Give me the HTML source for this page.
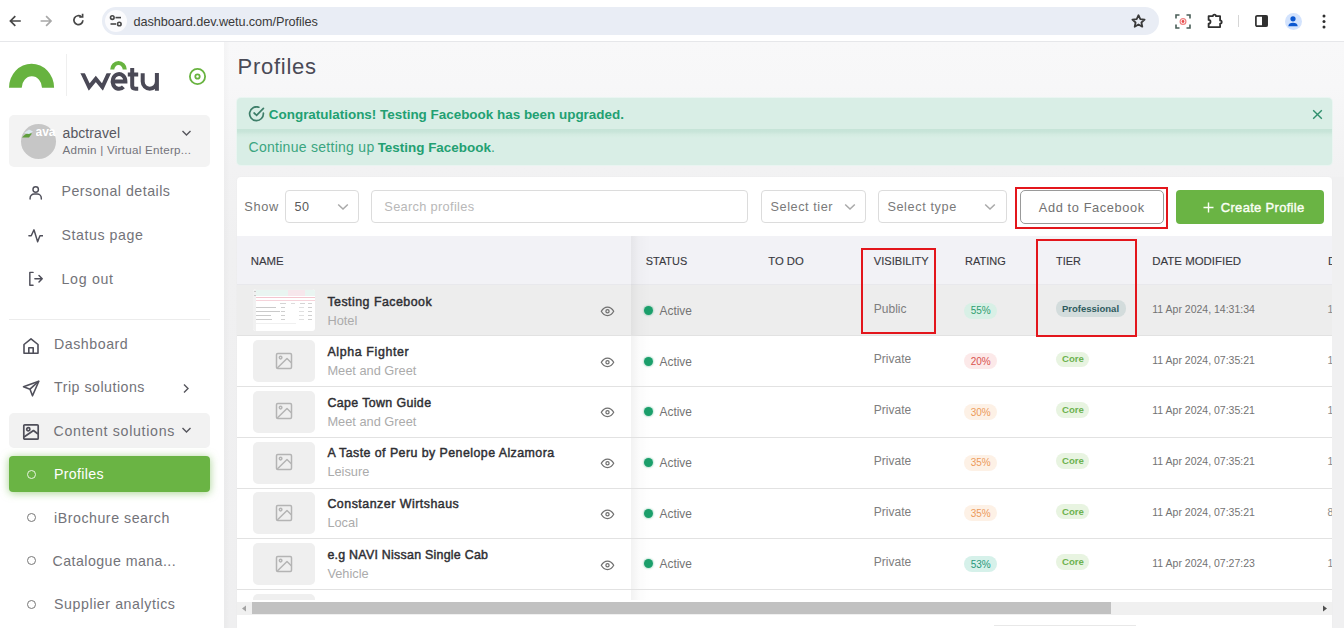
<!DOCTYPE html>
<html><head><meta charset="utf-8">
<style>
*{box-sizing:border-box;margin:0;padding:0}
html,body{width:1344px;height:628px;overflow:hidden;background:#f5f5f6;font-family:"Liberation Sans",sans-serif;position:relative}
.b{position:absolute}
.t{position:absolute;white-space:nowrap}
</style></head><body>
<div class="b" style="left:224px;top:42px;width:1120px;height:586px;background:linear-gradient(#f8f8f9 0px,#f7f7f8 45px,#f2f2f3 125px,#f0f0f1 200px,#efeff0 586px)"></div>
<div class="b" style="left:1332px;top:177px;width:12px;height:451px;background:#f0f0f1"></div>
<div class="b" style="left:224px;top:42px;width:6px;height:586px;background:linear-gradient(90deg,rgba(0,0,0,0.02),rgba(0,0,0,0))"></div>
<div class="t " style="left:237.5px;top:56px;font-size:22px;line-height:22px;color:#4a4a56;font-weight:400;letter-spacing:0.75px;">Profiles</div>
<div class="b" style="left:236px;top:97px;width:1097px;height:69px;background:rgba(230,245,240,0.7);border-radius:5px"></div>
<div class="b" style="left:237px;top:98px;width:1095px;height:67px;background:#d9eee6;border-radius:4px"></div>
<div class="b" style="left:237px;top:128.5px;width:1095px;height:9px;background:linear-gradient(#c6e4d8,#c8e5d9 30%,#d3ebe1 60%,#d9efe6)"></div>
<svg class="b" style="left:248px;top:106px" width="17" height="17" viewBox="0 0 17 17" fill="none" stroke="#3d7e69" stroke-width="1.7" stroke-linecap="round">
<path d="M10.86 1.22A6.9 6.9 0 1 0 15.37 7.1"/><path d="M6.1 7L8.6 9.3L15.4 2.4"/></svg>
<div class="t " style="left:268.8px;top:108px;font-size:13.45px;line-height:13.45px;color:#22a072;font-weight:700;letter-spacing:0px;">Congratulations! Testing Facebook has been upgraded.</div>
<svg class="b" style="left:1312px;top:109px" width="11" height="11" viewBox="0 0 11 11" fill="none" stroke="#2f8f6d" stroke-width="1.4">
<path d="M1.2 1.2L9.8 9.8M9.8 1.2L1.2 9.8"/></svg>
<div class="t " style="left:248.5px;top:140px;font-size:14.0px;line-height:14.0px;color:#3aa580;font-weight:400;letter-spacing:0.28px;">Continue setting up <b style="color:#23a072;font-size:13.45px;letter-spacing:0;margin-left:-1px">Testing Facebook</b>.</div>
<div class="b" style="left:237px;top:177px;width:1095px;height:451px;background:#fff;border-radius:4px 4px 0 0;box-shadow:0 0 2px rgba(0,0,0,0.04)"></div>
<div class="t " style="left:244.3px;top:201px;font-size:12.8px;line-height:12.8px;color:#747474;font-weight:400;letter-spacing:0.627px;">Show</div>
<div class="b" style="left:285px;top:190px;width:74px;height:33px;border:1px solid #dcdcdc;border-radius:4px;background:#fff"></div>
<div class="t " style="left:294.5px;top:201px;font-size:12.6px;line-height:12.6px;color:#5a5a5a;font-weight:400;letter-spacing:0.586px;">50</div>
<svg class="b" style="left:337px;top:203px" width="12" height="8" viewBox="0 0 12 8" fill="none" stroke="#a9a9a9" stroke-width="1.5"><path d="M1.2 1.5L6 6L10.8 1.5"/></svg>
<div class="b" style="left:371px;top:190px;width:377px;height:33px;border:1px solid #dcdcdc;border-radius:4px;background:#fff"></div>
<div class="t " style="left:384.3px;top:201px;font-size:12.8px;line-height:12.8px;color:#b8b8b8;font-weight:400;letter-spacing:0.316px;">Search profiles</div>
<div class="b" style="left:761px;top:190px;width:105px;height:33px;border:1px solid #dcdcdc;border-radius:4px;background:#fff"></div>
<div class="t " style="left:770.6px;top:201px;font-size:12.7px;line-height:12.7px;color:#7a7a7a;font-weight:400;letter-spacing:0.553px;">Select tier</div>
<svg class="b" style="left:843.5px;top:203px" width="12" height="8" viewBox="0 0 12 8" fill="none" stroke="#a9a9a9" stroke-width="1.5"><path d="M1.2 1.5L6 6L10.8 1.5"/></svg>
<div class="b" style="left:878px;top:190px;width:129px;height:33px;border:1px solid #dcdcdc;border-radius:4px;background:#fff"></div>
<div class="t " style="left:887.4px;top:201px;font-size:12.7px;line-height:12.7px;color:#7a7a7a;font-weight:400;letter-spacing:0.607px;">Select type</div>
<svg class="b" style="left:984px;top:203px" width="12" height="8" viewBox="0 0 12 8" fill="none" stroke="#a9a9a9" stroke-width="1.5"><path d="M1.2 1.5L6 6L10.8 1.5"/></svg>
<div class="b" style="left:1020px;top:189.5px;width:144px;height:34.5px;border:1px solid #9a9a9a;border-radius:5px;background:#fff"></div>
<div class="t " style="left:1038.8px;top:202px;font-size:12.8px;line-height:12.8px;color:#727272;font-weight:400;letter-spacing:0.617px;">Add to Facebook</div>
<div class="b" style="left:1176px;top:190px;width:148px;height:34px;background:#6ab444;border-radius:4px"></div>
<svg class="b" style="left:1203px;top:201.5px" width="11" height="11" viewBox="0 0 11 11" fill="none" stroke="#fbfff6" stroke-width="1.4"><path d="M5.5 0.5V10.5M0.5 5.5H10.5"/></svg>
<div class="t " style="left:1220.8px;top:201px;font-size:13.0px;line-height:13.0px;color:#fbfff6;font-weight:400;letter-spacing:0.302px;-webkit-text-stroke:0.4px #fbfff6">Create Profile</div>
<div class="b" style="left:237px;top:236px;width:1095px;height:49px;background:#f2f2f6;border-bottom:1px solid #e8e8ec"></div>
<div class="t " style="left:250.7px;top:256px;font-size:11.4px;line-height:11.4px;color:#38383e;font-weight:400;letter-spacing:0px;-webkit-text-stroke:0.12px #3d3d42">NAME</div>
<div class="t " style="left:645.8px;top:256px;font-size:10.9px;line-height:10.9px;color:#38383e;font-weight:400;letter-spacing:0px;-webkit-text-stroke:0.12px #3d3d42">STATUS</div>
<div class="t " style="left:768.2px;top:256px;font-size:11.3px;line-height:11.3px;color:#38383e;font-weight:400;letter-spacing:0px;-webkit-text-stroke:0.12px #3d3d42">TO DO</div>
<div class="t " style="left:873.8px;top:256px;font-size:11.1px;line-height:11.1px;color:#38383e;font-weight:400;letter-spacing:0px;-webkit-text-stroke:0.12px #3d3d42">VISIBILITY</div>
<div class="t " style="left:965.0px;top:256px;font-size:11.0px;line-height:11.0px;color:#38383e;font-weight:400;letter-spacing:0px;-webkit-text-stroke:0.12px #3d3d42">RATING</div>
<div class="t " style="left:1056.0px;top:256px;font-size:10.9px;line-height:10.9px;color:#38383e;font-weight:400;letter-spacing:0px;-webkit-text-stroke:0.12px #3d3d42">TIER</div>
<div class="t " style="left:1152.3px;top:256px;font-size:11.45px;line-height:11.45px;color:#38383e;font-weight:400;letter-spacing:0px;-webkit-text-stroke:0.12px #3d3d42">DATE MODIFIED</div>
<div class="t " style="left:1328.0px;top:256px;font-size:11.2px;line-height:11.2px;color:#38383e;font-weight:400;letter-spacing:0px;-webkit-text-stroke:0.12px #3d3d42">D</div>
<div class="b" style="left:237px;top:285px;width:1095px;height:50.3px;background:#ededed"></div>
<div class="b" style="left:237px;top:335.3px;width:1095px;height:1px;background:#e2e2e2;z-index:2"></div>
<div class="b" style="left:253px;top:289px;width:62px;height:42px;background:#fff;border-radius:3px;overflow:hidden"><div class="b" style="left:0px;top:0px;width:3px;height:42px;background:#f1f1f1"></div><div class="b" style="left:0.5px;top:2px;width:2px;height:1px;background:#c8c8c8"></div><div class="b" style="left:0.5px;top:6px;width:2px;height:1px;background:#c8c8c8"></div><div class="b" style="left:3px;top:0px;width:59px;height:1px;background:#eeeeee"></div><div class="b" style="left:3px;top:1px;width:59px;height:6px;background:#e9f5f1"></div><div class="b" style="left:35px;top:1px;width:17px;height:6px;background:#f7e7ec"></div><div class="b" style="left:3px;top:8px;width:59px;height:1.2px;background:#f3c6cf"></div><div class="b" style="left:3px;top:11px;width:59px;height:1.2px;background:#f5d3da"></div><div class="b" style="left:27px;top:14px;width:6px;height:1px;background:#d4d4d4"></div><div class="b" style="left:38px;top:14px;width:4px;height:1px;background:#dcdcdc"></div><div class="b" style="left:47px;top:14px;width:5px;height:1px;background:#d4d4d4"></div><div class="b" style="left:55px;top:14px;width:4px;height:1px;background:#d4d4d4"></div><div class="b" style="left:3px;top:17.5px;width:20px;height:1px;background:#cacaca"></div><div class="b" style="left:28px;top:18.0px;width:4px;height:1px;background:#cfcfcf"></div><div class="b" style="left:46px;top:17.5px;width:5px;height:1px;background:#e0e0e0"></div><div class="b" style="left:55px;top:17.5px;width:4px;height:1px;background:#cfcfcf"></div><div class="b" style="left:3px;top:21.5px;width:24px;height:1px;background:#cacaca"></div><div class="b" style="left:28px;top:22.0px;width:4px;height:1px;background:#cfcfcf"></div><div class="b" style="left:46px;top:21.5px;width:5px;height:1px;background:#e0e0e0"></div><div class="b" style="left:55px;top:21.5px;width:4px;height:1px;background:#cfcfcf"></div><div class="b" style="left:3px;top:25.5px;width:15px;height:1px;background:#cacaca"></div><div class="b" style="left:28px;top:26.0px;width:4px;height:1px;background:#cfcfcf"></div><div class="b" style="left:46px;top:25.5px;width:5px;height:1px;background:#e0e0e0"></div><div class="b" style="left:55px;top:25.5px;width:4px;height:1px;background:#cfcfcf"></div><div class="b" style="left:3px;top:29.5px;width:16px;height:1px;background:#cacaca"></div><div class="b" style="left:28px;top:30.0px;width:4px;height:1px;background:#cfcfcf"></div><div class="b" style="left:46px;top:29.5px;width:5px;height:1px;background:#e0e0e0"></div><div class="b" style="left:55px;top:29.5px;width:4px;height:1px;background:#cfcfcf"></div><div class="b" style="left:3px;top:33.5px;width:40px;height:1px;background:#f0f0f0"></div></div>
<div class="t " style="left:327.4px;top:296px;font-size:12.4px;line-height:12.4px;color:#2f2f34;font-weight:400;letter-spacing:0.474px;-webkit-text-stroke:0.45px #2f2f34">Testing Facebook</div>
<div class="t " style="left:327.4px;top:315px;font-size:12.8px;line-height:12.8px;color:#ababab;font-weight:400;letter-spacing:0px;">Hotel</div>
<svg class="b" style="left:600px;top:306px" width="15" height="11" viewBox="0 0 15 11" fill="none" stroke="#707070" stroke-width="1.25">
<path d="M1.3 5.3C2.9 2.4 5 1.1 7.5 1.1S12.1 2.4 13.7 5.3C12.1 8.2 10 9.5 7.5 9.5S2.9 8.2 1.3 5.3Z"/><circle cx="7.5" cy="5.3" r="1.6"/></svg>
<div class="b" style="left:644px;top:306.2px;width:9px;height:9px;border-radius:50%;background:#1b9f6b;box-shadow:0 0 1.5px 1px rgba(27,159,107,0.25)"></div>
<div class="t " style="left:659.5px;top:306px;font-size:11.9px;line-height:11.9px;color:#747474;font-weight:400;letter-spacing:0px;">Active</div>
<div class="t " style="left:873.8px;top:303px;font-size:12.0px;line-height:12.0px;color:#7e7e7e;font-weight:400;letter-spacing:0px;">Public</div>
<div class="b" style="left:964px;top:302.8px;width:33px;height:16.2px;border-radius:8px;background:#d8f0e6"></div>
<div class="t " style="left:970.7px;top:306px;font-size:10.0px;line-height:10.0px;color:#2e9d6f;font-weight:400;letter-spacing:0px;">55%</div>
<div class="b" style="left:1055.5px;top:300.2px;width:70px;height:16.5px;border-radius:8px;background:#d3dcdc"></div>
<div class="t " style="left:1062.0px;top:304px;font-size:9.5px;line-height:9.5px;color:#2e5b5e;font-weight:700;letter-spacing:0px;">Professional</div>
<div class="t " style="left:1152.3px;top:304px;font-size:10.5px;line-height:10.5px;color:#737373;font-weight:400;letter-spacing:0px;">11 Apr 2024, 14:31:34</div>
<div class="t " style="left:1327.5px;top:304px;font-size:10.5px;line-height:10.5px;color:#8a8a8a;font-weight:400;letter-spacing:0px;">1</div>
<div class="b" style="left:237px;top:335.3px;width:1095px;height:50.7px;background:#ffffff"></div>
<div class="b" style="left:237px;top:386.0px;width:1095px;height:1px;background:#e2e2e2;z-index:2"></div>
<div class="b" style="left:253px;top:340px;width:62px;height:42px;background:#efefef;border-radius:5px"></div>
<svg class="b" style="left:275px;top:352px" width="18" height="18" viewBox="0 0 18 18" fill="none" stroke="#b4b4b4" stroke-width="1.5" stroke-linejoin="round">
<rect x="1.5" y="1.5" width="15" height="15" rx="1.2"/><circle cx="5.6" cy="5.6" r="1.3"/><path d="M2.3 16L12 6.5L16.3 10.8"/></svg>
<div class="t " style="left:327.4px;top:346px;font-size:12.4px;line-height:12.4px;color:#2f2f34;font-weight:400;letter-spacing:0.629px;-webkit-text-stroke:0.45px #2f2f34">Alpha Fighter</div>
<div class="t " style="left:327.4px;top:365px;font-size:12.8px;line-height:12.8px;color:#ababab;font-weight:400;letter-spacing:0px;">Meet and Greet</div>
<svg class="b" style="left:600px;top:357px" width="15" height="11" viewBox="0 0 15 11" fill="none" stroke="#707070" stroke-width="1.25">
<path d="M1.3 5.3C2.9 2.4 5 1.1 7.5 1.1S12.1 2.4 13.7 5.3C12.1 8.2 10 9.5 7.5 9.5S2.9 8.2 1.3 5.3Z"/><circle cx="7.5" cy="5.3" r="1.6"/></svg>
<div class="b" style="left:644px;top:356.5px;width:9px;height:9px;border-radius:50%;background:#1b9f6b;box-shadow:0 0 1.5px 1px rgba(27,159,107,0.25)"></div>
<div class="t " style="left:659.5px;top:357px;font-size:11.9px;line-height:11.9px;color:#747474;font-weight:400;letter-spacing:0px;">Active</div>
<div class="t " style="left:873.8px;top:353px;font-size:12.0px;line-height:12.0px;color:#7e7e7e;font-weight:400;letter-spacing:0px;">Private</div>
<div class="b" style="left:964px;top:353.1px;width:33px;height:16.2px;border-radius:8px;background:#fce9e9"></div>
<div class="t " style="left:970.7px;top:357px;font-size:10.0px;line-height:10.0px;color:#d9534f;font-weight:400;letter-spacing:0px;">20%</div>
<div class="b" style="left:1055.5px;top:351.5px;width:33px;height:15.5px;border-radius:8px;background:#e8f4e1"></div>
<div class="t " style="left:1062.0px;top:354px;font-size:9.6px;line-height:9.6px;color:#6db24f;font-weight:700;letter-spacing:0px;">Core</div>
<div class="t " style="left:1152.3px;top:355px;font-size:10.5px;line-height:10.5px;color:#737373;font-weight:400;letter-spacing:0px;">11 Apr 2024, 07:35:21</div>
<div class="t " style="left:1327.5px;top:355px;font-size:10.5px;line-height:10.5px;color:#8a8a8a;font-weight:400;letter-spacing:0px;">1</div>
<div class="b" style="left:237px;top:386px;width:1095px;height:50.8px;background:#ffffff"></div>
<div class="b" style="left:237px;top:436.8px;width:1095px;height:1px;background:#e2e2e2;z-index:2"></div>
<div class="b" style="left:253px;top:391px;width:62px;height:42px;background:#efefef;border-radius:5px"></div>
<svg class="b" style="left:275px;top:402px" width="18" height="18" viewBox="0 0 18 18" fill="none" stroke="#b4b4b4" stroke-width="1.5" stroke-linejoin="round">
<rect x="1.5" y="1.5" width="15" height="15" rx="1.2"/><circle cx="5.6" cy="5.6" r="1.3"/><path d="M2.3 16L12 6.5L16.3 10.8"/></svg>
<div class="t " style="left:327.4px;top:397px;font-size:12.4px;line-height:12.4px;color:#2f2f34;font-weight:400;letter-spacing:0.383px;-webkit-text-stroke:0.45px #2f2f34">Cape Town Guide</div>
<div class="t " style="left:327.4px;top:416px;font-size:12.8px;line-height:12.8px;color:#ababab;font-weight:400;letter-spacing:0px;">Meet and Greet</div>
<svg class="b" style="left:600px;top:407px" width="15" height="11" viewBox="0 0 15 11" fill="none" stroke="#707070" stroke-width="1.25">
<path d="M1.3 5.3C2.9 2.4 5 1.1 7.5 1.1S12.1 2.4 13.7 5.3C12.1 8.2 10 9.5 7.5 9.5S2.9 8.2 1.3 5.3Z"/><circle cx="7.5" cy="5.3" r="1.6"/></svg>
<div class="b" style="left:644px;top:407.2px;width:9px;height:9px;border-radius:50%;background:#1b9f6b;box-shadow:0 0 1.5px 1px rgba(27,159,107,0.25)"></div>
<div class="t " style="left:659.5px;top:407px;font-size:11.9px;line-height:11.9px;color:#747474;font-weight:400;letter-spacing:0px;">Active</div>
<div class="t " style="left:873.8px;top:404px;font-size:12.0px;line-height:12.0px;color:#7e7e7e;font-weight:400;letter-spacing:0px;">Private</div>
<div class="b" style="left:964px;top:403.8px;width:33px;height:16.2px;border-radius:8px;background:#fdf1e6"></div>
<div class="t " style="left:970.7px;top:408px;font-size:10.0px;line-height:10.0px;color:#ec9a5a;font-weight:400;letter-spacing:0px;">30%</div>
<div class="b" style="left:1055.5px;top:402.2px;width:33px;height:15.5px;border-radius:8px;background:#e8f4e1"></div>
<div class="t " style="left:1062.0px;top:405px;font-size:9.6px;line-height:9.6px;color:#6db24f;font-weight:700;letter-spacing:0px;">Core</div>
<div class="t " style="left:1152.3px;top:405px;font-size:10.5px;line-height:10.5px;color:#737373;font-weight:400;letter-spacing:0px;">11 Apr 2024, 07:35:21</div>
<div class="t " style="left:1327.5px;top:405px;font-size:10.5px;line-height:10.5px;color:#8a8a8a;font-weight:400;letter-spacing:0px;">1</div>
<div class="b" style="left:237px;top:436.8px;width:1095px;height:50.7px;background:#ffffff"></div>
<div class="b" style="left:237px;top:487.5px;width:1095px;height:1px;background:#e2e2e2;z-index:2"></div>
<div class="b" style="left:253px;top:442px;width:62px;height:42px;background:#efefef;border-radius:5px"></div>
<svg class="b" style="left:275px;top:453px" width="18" height="18" viewBox="0 0 18 18" fill="none" stroke="#b4b4b4" stroke-width="1.5" stroke-linejoin="round">
<rect x="1.5" y="1.5" width="15" height="15" rx="1.2"/><circle cx="5.6" cy="5.6" r="1.3"/><path d="M2.3 16L12 6.5L16.3 10.8"/></svg>
<div class="t " style="left:327.4px;top:447px;font-size:12.4px;line-height:12.4px;color:#2f2f34;font-weight:400;letter-spacing:0.443px;-webkit-text-stroke:0.45px #2f2f34">A Taste of Peru by Penelope Alzamora</div>
<div class="t " style="left:327.4px;top:466px;font-size:12.8px;line-height:12.8px;color:#ababab;font-weight:400;letter-spacing:0px;">Leisure</div>
<svg class="b" style="left:600px;top:458px" width="15" height="11" viewBox="0 0 15 11" fill="none" stroke="#707070" stroke-width="1.25">
<path d="M1.3 5.3C2.9 2.4 5 1.1 7.5 1.1S12.1 2.4 13.7 5.3C12.1 8.2 10 9.5 7.5 9.5S2.9 8.2 1.3 5.3Z"/><circle cx="7.5" cy="5.3" r="1.6"/></svg>
<div class="b" style="left:644px;top:458.0px;width:9px;height:9px;border-radius:50%;background:#1b9f6b;box-shadow:0 0 1.5px 1px rgba(27,159,107,0.25)"></div>
<div class="t " style="left:659.5px;top:458px;font-size:11.9px;line-height:11.9px;color:#747474;font-weight:400;letter-spacing:0px;">Active</div>
<div class="t " style="left:873.8px;top:455px;font-size:12.0px;line-height:12.0px;color:#7e7e7e;font-weight:400;letter-spacing:0px;">Private</div>
<div class="b" style="left:964px;top:454.6px;width:33px;height:16.2px;border-radius:8px;background:#fdf1e6"></div>
<div class="t " style="left:970.7px;top:458px;font-size:10.0px;line-height:10.0px;color:#ec9a5a;font-weight:400;letter-spacing:0px;">35%</div>
<div class="b" style="left:1055.5px;top:453.0px;width:33px;height:15.5px;border-radius:8px;background:#e8f4e1"></div>
<div class="t " style="left:1062.0px;top:456px;font-size:9.6px;line-height:9.6px;color:#6db24f;font-weight:700;letter-spacing:0px;">Core</div>
<div class="t " style="left:1152.3px;top:456px;font-size:10.5px;line-height:10.5px;color:#737373;font-weight:400;letter-spacing:0px;">11 Apr 2024, 07:35:21</div>
<div class="t " style="left:1327.5px;top:456px;font-size:10.5px;line-height:10.5px;color:#8a8a8a;font-weight:400;letter-spacing:0px;">1</div>
<div class="b" style="left:237px;top:487.5px;width:1095px;height:50.7px;background:#ffffff"></div>
<div class="b" style="left:237px;top:538.2px;width:1095px;height:1px;background:#e2e2e2;z-index:2"></div>
<div class="b" style="left:253px;top:492px;width:62px;height:42px;background:#efefef;border-radius:5px"></div>
<svg class="b" style="left:275px;top:504px" width="18" height="18" viewBox="0 0 18 18" fill="none" stroke="#b4b4b4" stroke-width="1.5" stroke-linejoin="round">
<rect x="1.5" y="1.5" width="15" height="15" rx="1.2"/><circle cx="5.6" cy="5.6" r="1.3"/><path d="M2.3 16L12 6.5L16.3 10.8"/></svg>
<div class="t " style="left:327.4px;top:498px;font-size:12.4px;line-height:12.4px;color:#2f2f34;font-weight:400;letter-spacing:0.502px;-webkit-text-stroke:0.45px #2f2f34">Constanzer Wirtshaus</div>
<div class="t " style="left:327.4px;top:517px;font-size:12.8px;line-height:12.8px;color:#ababab;font-weight:400;letter-spacing:0px;">Local</div>
<svg class="b" style="left:600px;top:509px" width="15" height="11" viewBox="0 0 15 11" fill="none" stroke="#707070" stroke-width="1.25">
<path d="M1.3 5.3C2.9 2.4 5 1.1 7.5 1.1S12.1 2.4 13.7 5.3C12.1 8.2 10 9.5 7.5 9.5S2.9 8.2 1.3 5.3Z"/><circle cx="7.5" cy="5.3" r="1.6"/></svg>
<div class="b" style="left:644px;top:508.7px;width:9px;height:9px;border-radius:50%;background:#1b9f6b;box-shadow:0 0 1.5px 1px rgba(27,159,107,0.25)"></div>
<div class="t " style="left:659.5px;top:509px;font-size:11.9px;line-height:11.9px;color:#747474;font-weight:400;letter-spacing:0px;">Active</div>
<div class="t " style="left:873.8px;top:506px;font-size:12.0px;line-height:12.0px;color:#7e7e7e;font-weight:400;letter-spacing:0px;">Private</div>
<div class="b" style="left:964px;top:505.3px;width:33px;height:16.2px;border-radius:8px;background:#fdf1e6"></div>
<div class="t " style="left:970.7px;top:509px;font-size:10.0px;line-height:10.0px;color:#ec9a5a;font-weight:400;letter-spacing:0px;">35%</div>
<div class="b" style="left:1055.5px;top:503.7px;width:33px;height:15.5px;border-radius:8px;background:#e8f4e1"></div>
<div class="t " style="left:1062.0px;top:507px;font-size:9.6px;line-height:9.6px;color:#6db24f;font-weight:700;letter-spacing:0px;">Core</div>
<div class="t " style="left:1152.3px;top:507px;font-size:10.5px;line-height:10.5px;color:#737373;font-weight:400;letter-spacing:0px;">11 Apr 2024, 07:35:21</div>
<div class="t " style="left:1327.5px;top:507px;font-size:10.5px;line-height:10.5px;color:#8a8a8a;font-weight:400;letter-spacing:0px;">8</div>
<div class="b" style="left:237px;top:538.2px;width:1095px;height:50.6px;background:#ffffff"></div>
<div class="b" style="left:237px;top:588.8px;width:1095px;height:1px;background:#e2e2e2;z-index:2"></div>
<div class="b" style="left:253px;top:543px;width:62px;height:42px;background:#efefef;border-radius:5px"></div>
<svg class="b" style="left:275px;top:555px" width="18" height="18" viewBox="0 0 18 18" fill="none" stroke="#b4b4b4" stroke-width="1.5" stroke-linejoin="round">
<rect x="1.5" y="1.5" width="15" height="15" rx="1.2"/><circle cx="5.6" cy="5.6" r="1.3"/><path d="M2.3 16L12 6.5L16.3 10.8"/></svg>
<div class="t " style="left:327.4px;top:549px;font-size:12.4px;line-height:12.4px;color:#2f2f34;font-weight:400;letter-spacing:0.262px;-webkit-text-stroke:0.45px #2f2f34">e.g NAVI Nissan Single Cab</div>
<div class="t " style="left:327.4px;top:568px;font-size:12.8px;line-height:12.8px;color:#ababab;font-weight:400;letter-spacing:0px;">Vehicle</div>
<svg class="b" style="left:600px;top:560px" width="15" height="11" viewBox="0 0 15 11" fill="none" stroke="#707070" stroke-width="1.25">
<path d="M1.3 5.3C2.9 2.4 5 1.1 7.5 1.1S12.1 2.4 13.7 5.3C12.1 8.2 10 9.5 7.5 9.5S2.9 8.2 1.3 5.3Z"/><circle cx="7.5" cy="5.3" r="1.6"/></svg>
<div class="b" style="left:644px;top:559.4px;width:9px;height:9px;border-radius:50%;background:#1b9f6b;box-shadow:0 0 1.5px 1px rgba(27,159,107,0.25)"></div>
<div class="t " style="left:659.5px;top:559px;font-size:11.9px;line-height:11.9px;color:#747474;font-weight:400;letter-spacing:0px;">Active</div>
<div class="t " style="left:873.8px;top:556px;font-size:12.0px;line-height:12.0px;color:#7e7e7e;font-weight:400;letter-spacing:0px;">Private</div>
<div class="b" style="left:964px;top:556.0px;width:33px;height:16.2px;border-radius:8px;background:#d6f1ea"></div>
<div class="t " style="left:970.7px;top:560px;font-size:10.0px;line-height:10.0px;color:#27987a;font-weight:400;letter-spacing:0px;">53%</div>
<div class="b" style="left:1055.5px;top:554.4px;width:33px;height:15.5px;border-radius:8px;background:#e8f4e1"></div>
<div class="t " style="left:1062.0px;top:557px;font-size:9.6px;line-height:9.6px;color:#6db24f;font-weight:700;letter-spacing:0px;">Core</div>
<div class="t " style="left:1152.3px;top:558px;font-size:10.5px;line-height:10.5px;color:#737373;font-weight:400;letter-spacing:0px;">11 Apr 2024, 07:27:23</div>
<div class="t " style="left:1327.5px;top:558px;font-size:10.5px;line-height:10.5px;color:#8a8a8a;font-weight:400;letter-spacing:0px;">1</div>
<div class="b" style="left:237px;top:589px;width:1095px;height:11px;background:#fff"></div>
<div class="b" style="left:253px;top:594px;width:62px;height:6px;background:#efefef;border-radius:5px 5px 0 0"></div>
<div class="b" style="left:631px;top:236px;width:20px;height:364px;background:linear-gradient(90deg,rgba(0,0,0,0.05),rgba(0,0,0,0.015) 40%,rgba(0,0,0,0))"></div>
<div class="b" style="left:1332px;top:236px;width:12px;height:364px;background:#f0f0f1"></div>
<div class="b" style="left:237px;top:601.5px;width:1095px;height:13px;background:#f0f0f0"></div>
<div class="b" style="left:252px;top:601.5px;width:859px;height:12.5px;background:#c1c1c1"></div>
<svg class="b" style="left:241px;top:605px" width="6" height="7" viewBox="0 0 6 7"><path d="M5 0.5V6.5L1 3.5Z" fill="#a3a3a3"/></svg>
<svg class="b" style="left:1322px;top:605px" width="6" height="7" viewBox="0 0 6 7"><path d="M1 0.5V6.5L5 3.5Z" fill="#505050"/></svg>
<div class="b" style="left:994px;top:625px;width:142px;height:1px;background:#e8e8e8"></div>
<div class="b" style="left:861px;top:248px;width:75px;height:86px;border:2.6px solid #e3161c;z-index:5"></div>
<div class="b" style="left:1036px;top:239px;width:101px;height:98px;border:2.6px solid #e3161c;z-index:5"></div>
<div class="b" style="left:1015px;top:187px;width:153px;height:42px;border:2.6px solid #e3161c;z-index:5"></div>
<div class="b" style="left:0px;top:0px;width:1344px;height:42px;background:#fff;border-bottom:1px solid #e6e7ea"></div>
<div class="b" style="left:102px;top:7px;width:1057px;height:28px;background:#e9edf5;border-radius:14px"></div>
<div class="b" style="left:105px;top:10px;width:22px;height:22px;background:#fbfbfd;border-radius:11px"></div>
<svg class="b" style="left:108px;top:13px" width="16" height="16" viewBox="0 0 16 16" fill="none" stroke="#474747" stroke-width="1.6">
<circle cx="4.3" cy="4.6" r="1.8"/><line x1="7.5" y1="4.6" x2="13" y2="4.6"/>
<circle cx="11.3" cy="11" r="1.8"/><line x1="2.5" y1="11" x2="8" y2="11"/></svg>
<div class="t " style="left:133.5px;top:16px;font-size:12.7px;line-height:12.7px;color:#3a3a3a;font-weight:400;letter-spacing:-0.08px;">dashboard.dev.wetu.com/Profiles</div>
<svg class="b" style="left:7px;top:12.5px" width="16" height="16" viewBox="0 0 16 16" fill="none" stroke="#474747" stroke-width="1.7">
<path d="M13.8 8H3.4M8.3 3.1L3.4 8L8.3 12.9"/></svg>
<svg class="b" style="left:38px;top:12.5px" width="16" height="16" viewBox="0 0 16 16" fill="none" stroke="#a8a8a8" stroke-width="1.7">
<path d="M2.6 8H13M8.1 3.1L13 8L8.1 12.9"/></svg>
<svg class="b" style="left:70.2px;top:12.2px" width="16" height="16" viewBox="0 0 16 16" fill="none" stroke="#474747" stroke-width="1.7">
<path d="M12.9 8.3A4.5 4.5 0 1 1 11.4 4.8"/><path d="M9.2 5H12.6V1.8" /></svg>
<svg class="b" style="left:1130px;top:13px" width="17" height="16" viewBox="0 0 17 16" fill="none" stroke="#3a3a3a" stroke-width="1.8" stroke-linejoin="round">
<path d="M8.5 2.2L10.3 6.2L14.6 6.6L11.4 9.5L12.3 13.7L8.5 11.5L4.7 13.7L5.6 9.5L2.4 6.6L6.7 6.2Z"/></svg>
<svg class="b" style="left:1175px;top:14px" width="16" height="15" viewBox="0 0 16 15" fill="none" stroke="#4a5e58" stroke-width="1.6">
<path d="M1 4.5V1H4.5M11.5 1H15V4.5M15 10.5V14H11.5M4.5 14H1V10.5"/><circle cx="8" cy="7.5" r="2.9" stroke="#f08080" stroke-width="1.2"/><circle cx="8" cy="7.5" r="1.4" fill="#e84848" stroke="none"/></svg>
<svg class="b" style="left:1206px;top:12.8px" width="18" height="17" viewBox="0 0 18 17" fill="none" stroke="#303030" stroke-width="1.8" stroke-linejoin="round">
<path d="M2.6 3.2H6.8A1.6 1.6 0 0 1 10 3.2H14.1V7.4A1.6 1.6 0 0 1 14.1 10.6V14.1H2.6V10.7A1.9 1.9 0 0 0 2.6 6.9Z"/></svg>
<div class="b" style="left:1238px;top:15px;width:1px;height:12px;background:#d6d6d6"></div>
<svg class="b" style="left:1254px;top:14px" width="15" height="14" viewBox="0 0 15 14" fill="none">
<rect x="1.9" y="1.8" width="11.2" height="10.4" rx="1.3" stroke="#303030" stroke-width="1.7"/><rect x="8" y="1.5" width="5.5" height="11" fill="#303030"/></svg>
<div class="b" style="left:1284.5px;top:12.5px;width:17px;height:17px;background:#d3e3fd;border-radius:50%"></div>
<svg class="b" style="left:1286px;top:14px" width="14" height="14" viewBox="0 0 14 14">
<circle cx="7" cy="4.8" r="2.6" fill="#0b57d0"/><path d="M2.3 12.2C2.3 9.8 4.5 8.7 7 8.7S11.7 9.8 11.7 12.2Z" fill="#0b57d0"/></svg>
<svg class="b" style="left:1321px;top:13px" width="6" height="17" viewBox="0 0 6 17" fill="#303030">
<circle cx="3" cy="3" r="1.5"/><circle cx="3" cy="8.5" r="1.5"/><circle cx="3" cy="14" r="1.5"/></svg>
<div class="b" style="left:0px;top:42px;width:224px;height:586px;background:#fff"></div>
<svg class="b" style="left:0px;top:50px" width="170" height="50" viewBox="0 50 170 50">
<path d="M9 87.75A22.55 24 0 0 1 54.1 87.75H42A10.15 11.45 0 0 0 21.7 87.75Z" fill="#67b33f"/>
<path d="M110.2 69.6A8.3 8.6 0 0 1 126.8 69.6H122.7A4.2 4.5 0 0 0 114.3 69.6Z" fill="#67b33f"/>
<g fill="none" stroke="#4a4956" stroke-width="4">
<clipPath id="wc"><rect x="76" y="73.2" width="36" height="17.5"/></clipPath><path clip-path="url(#wc)" d="M81.6 71L89.2 87L95.8 79L102.4 87L109.8 71" stroke-linejoin="miter" stroke-miterlimit="8"/>
<path d="M112.6 81.4H125.4A6.4 7.35 0 1 0 123.4 86.8"/>
<path d="M132.2 68V85.8Q132.2 88.7 135.4 88.7H138.2M127.8 74.5H138.2"/>
<path d="M142.7 73.2V81.6A7.1 7.1 0 0 0 156.9 81.6V73.2M156.9 73V90.7"/>
</g></svg>
<div class="b" style="left:66px;top:54px;width:1px;height:42px;background:#efefef"></div>
<svg class="b" style="left:188px;top:67px" width="19" height="19" viewBox="0 0 19 19" fill="none" stroke="#68b33f" stroke-width="1.8">
<circle cx="9.5" cy="9.5" r="7.6"/><circle cx="9.5" cy="9.5" r="2.2"/></svg>
<div class="b" style="left:9px;top:115px;width:201px;height:52px;background:#f3f3f3;border-radius:5px"></div>
<div class="b" style="left:21px;top:124px;width:35px;height:35px;background:#c6c6c6;border-radius:50%;overflow:hidden"></div>
<div class="t " style="left:35.5px;top:126px;font-size:12px;line-height:12px;color:#ffffff;font-weight:700;letter-spacing:0px;overflow:hidden;width:20px">ava</div>
<svg class="b" style="left:20px;top:127px" width="16" height="12" viewBox="0 0 16 12">
<path d="M2 10.5Q6 5 12 6.5L9 10.5Z" fill="#5f9e3c"/><path d="M4 6L9 2.5L13 4.5L9 7Z" fill="#dce8f0"/></svg>
<div class="t " style="left:62.5px;top:126px;font-size:14.0px;line-height:14.0px;color:#57575f;font-weight:400;letter-spacing:0.1px;">abctravel</div>
<div class="t " style="left:62.5px;top:144px;font-size:11.6px;line-height:11.6px;color:#74747b;font-weight:400;letter-spacing:0.27px;">Admin | Virtual Enterp...</div>
<svg class="b" style="left:181px;top:129px" width="11" height="8" viewBox="0 0 11 8" fill="none" stroke="#55555c" stroke-width="1.4">
<path d="M1.5 2L5.5 6L9.5 2"/></svg>
<div class="t " style="left:61.5px;top:184px;font-size:14.2px;line-height:14.2px;color:#737379;font-weight:400;letter-spacing:0.498px;">Personal details</div>
<svg class="b" style="left:27.8px;top:184.8px" width="15.4" height="15.4" viewBox="0 0 17 17" fill="none" stroke="#4f4f5a" stroke-width="1.6" stroke-linecap="round">
<circle cx="8.5" cy="5" r="3"/><path d="M2.3 15.5V14.5A4.5 4.5 0 0 1 6.8 10H10.2A4.5 4.5 0 0 1 14.7 14.5V15.5"/></svg>
<div class="t " style="left:61.5px;top:228px;font-size:14.2px;line-height:14.2px;color:#737379;font-weight:400;letter-spacing:0.561px;">Status page</div>
<svg class="b" style="left:27.8px;top:227.8px" width="15.6" height="15.6" viewBox="0 0 17 17" fill="none" stroke="#4f4f5a" stroke-width="1.6" stroke-linecap="round" stroke-linejoin="round">
<path d="M1 8.5H3.5L6.5 2L10.5 15L13 8.5H16"/></svg>
<div class="t " style="left:61.5px;top:272px;font-size:14.2px;line-height:14.2px;color:#737379;font-weight:400;letter-spacing:0.705px;">Log out</div>
<svg class="b" style="left:27.8px;top:271.3px" width="15.6" height="15.6" viewBox="0 0 17 17" fill="none" stroke="#4f4f5a" stroke-width="1.6" stroke-linecap="round" stroke-linejoin="round">
<path d="M5.5 1.5H2V15.5H5.5M7.5 8.5H15.5M12 5L15.5 8.5L12 12"/></svg>
<div class="b" style="left:9px;top:319px;width:201px;height:1px;background:#ececec"></div>
<div class="t " style="left:54.0px;top:337px;font-size:14.2px;line-height:14.2px;color:#737379;font-weight:400;letter-spacing:0.542px;">Dashboard</div>
<svg class="b" style="left:22px;top:337px" width="18" height="18" viewBox="0 0 18 18" fill="none" stroke="#4f4f5a" stroke-width="1.6" stroke-linejoin="round">
<path d="M2 7.5L9 1.8L16 7.5V16.2H2Z"/><path d="M6.8 16.2V10.8H11.2V16.2"/></svg>
<div class="t " style="left:54.0px;top:380px;font-size:14.2px;line-height:14.2px;color:#737379;font-weight:400;letter-spacing:0.507px;">Trip solutions</div>
<svg class="b" style="left:22px;top:380px" width="18" height="17" viewBox="0 0 18 17" fill="none" stroke="#4f4f5a" stroke-width="1.6" stroke-linejoin="round">
<path d="M16.8 1.2L1.5 6.8L8 9.2L10.5 15.8Z"/><path d="M16.8 1.2L8 9.2"/></svg>
<svg class="b" style="left:182px;top:383px" width="8" height="11" viewBox="0 0 8 11" fill="none" stroke="#55555c" stroke-width="1.4">
<path d="M2 1.5L6 5.5L2 9.5"/></svg>
<div class="b" style="left:9px;top:413px;width:201px;height:35px;background:#f2f2f2;border-radius:5px"></div>
<div class="t " style="left:53.5px;top:424px;font-size:14.2px;line-height:14.2px;color:#737379;font-weight:400;letter-spacing:0.705px;">Content solutions</div>
<svg class="b" style="left:22px;top:423px" width="18" height="18" viewBox="0 0 18 18" fill="none" stroke="#4f4f5a" stroke-width="1.7" stroke-linejoin="round">
<rect x="1.8" y="1.8" width="14.4" height="14.4" rx="1"/><circle cx="6.3" cy="6.3" r="1.6"/><path d="M2 14L11.5 7.5L16 11"/></svg>
<svg class="b" style="left:181px;top:426px" width="11" height="8" viewBox="0 0 11 8" fill="none" stroke="#55555c" stroke-width="1.4">
<path d="M1.5 2L5.5 6L9.5 2"/></svg>
<div class="b" style="left:9px;top:456px;width:201px;height:36px;background:#6ab444;border-radius:4px;box-shadow:0 1px 9px rgba(106,180,68,0.6)"></div>
<div class="b" style="left:27px;top:470px;width:9px;height:9px;border:1.4px solid #e8f5e0;border-radius:50%"></div>
<div class="t " style="left:54.0px;top:467px;font-size:14.2px;line-height:14.2px;color:#ffffff;font-weight:400;letter-spacing:0.322px;">Profiles</div>
<div class="b" style="left:27px;top:513px;width:9px;height:9px;border:1.4px solid #777;border-radius:50%"></div>
<div class="b" style="left:27px;top:556px;width:9px;height:9px;border:1.4px solid #777;border-radius:50%"></div>
<div class="b" style="left:27px;top:600px;width:9px;height:9px;border:1.4px solid #777;border-radius:50%"></div>
<div class="t " style="left:54.0px;top:511px;font-size:14.2px;line-height:14.2px;color:#737379;font-weight:400;letter-spacing:0.538px;">iBrochure search</div>
<div class="t " style="left:52.5px;top:554px;font-size:14.2px;line-height:14.2px;color:#737379;font-weight:400;letter-spacing:0.454px;">Catalogue mana...</div>
<div class="t " style="left:54.0px;top:597px;font-size:14.2px;line-height:14.2px;color:#737379;font-weight:400;letter-spacing:0.571px;">Supplier analytics</div>
</body></html>
